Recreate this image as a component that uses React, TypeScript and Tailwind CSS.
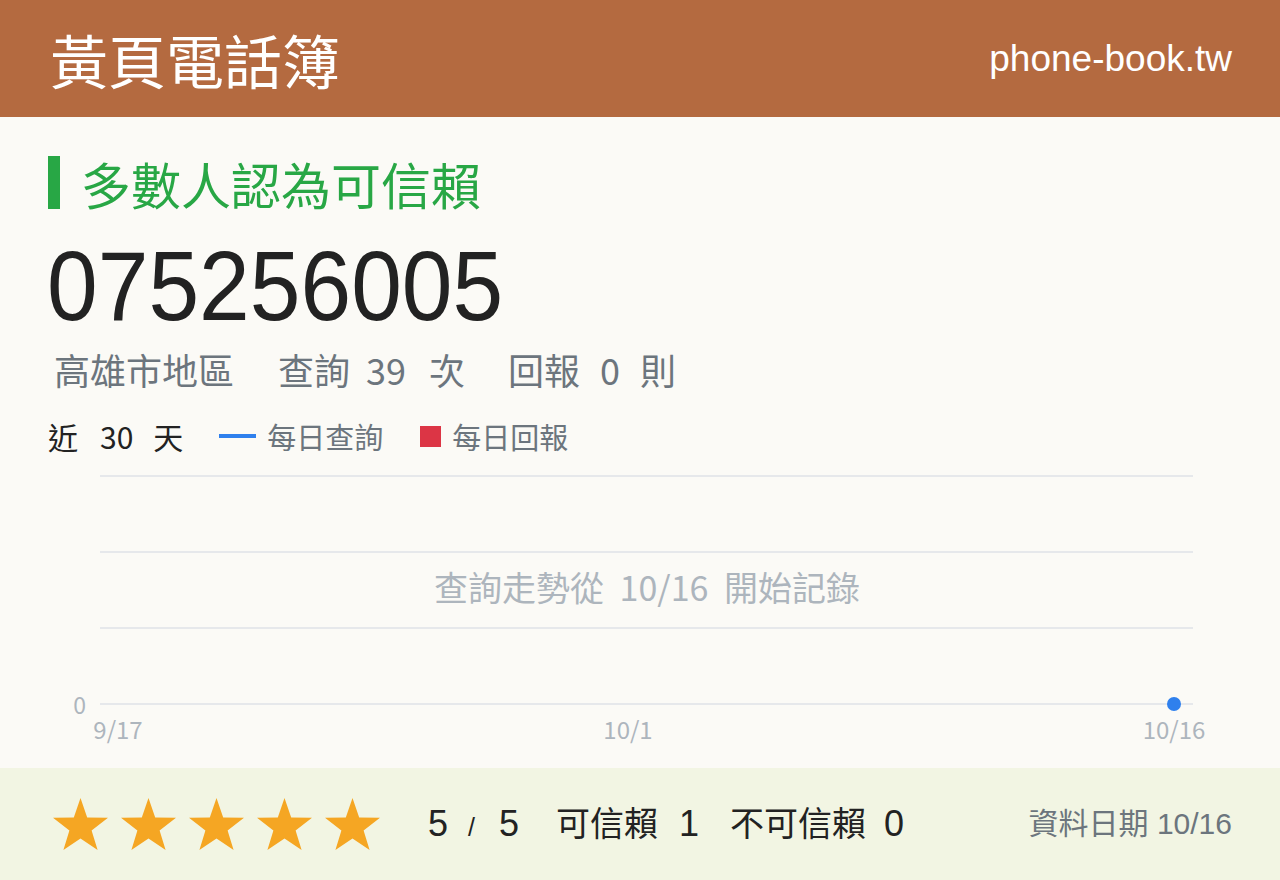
const cjk = { fontFamily: '"Noto Sans CJK TC", sans-serif' };
const latin = { fontFamily: '"Liberation Sans", "Noto Sans CJK TC", sans-serif' };

const Star = () => (
  <svg width="55" height="52" viewBox="0 0 55 52" className="shrink-0">
    <polygon
      points="27.5,0 34.2,19.6 55,19.8 38.6,32.6 44.6,52 27.5,40.6 10.4,52 16.4,32.6 0,19.8 20.8,19.6"
      fill="#f5a623"
    />
  </svg>
);

// 30-day lookup trend; only one data point so far
const TrendChart = () => {
  const grid = [14, 90, 166, 242];
  return (
    <svg width="1280" height="300" viewBox="0 0 1280 300" className="block" style={cjk}>
      {grid.map((y) => (
        <line key={y} x1="100" x2="1193" y1={y} y2={y} stroke="#e6e8eb" strokeWidth="2" />
      ))}
      <text x="86" y="242" textAnchor="end" dominantBaseline="central" fontSize="23" fill="#adb5bd">
        0
      </text>
      <text x="118" y="277" textAnchor="middle" fontSize="24" fill="#adb5bd">9/17</text>
      <text x="628" y="277" textAnchor="middle" fontSize="24" fill="#adb5bd">10/1</text>
      <text x="1174" y="277" textAnchor="middle" fontSize="24" fill="#adb5bd">10/16</text>
      <text
        x="647"
        y="124"
        textAnchor="middle"
        dominantBaseline="central"
        fontSize="34"
        wordSpacing="8"
        fill="#adb5bd"
      >
        查詢走勢從 10/16 開始記錄
      </text>
      <circle cx="1174" cy="242" r="7" fill="#2f80ed" />
    </svg>
  );
};

export default function App() {
  return (
    <div className="w-[1280px] h-[880px] flex flex-col bg-[#fbfaf6] overflow-hidden">
      <header className="h-[117px] shrink-0 bg-[#b46a40] flex items-center justify-between pl-[50px] pr-[48px]">
        <span className="text-[58px] text-white leading-none" style={cjk}>黃頁電話簿</span>
        <span className="text-[37px] text-white leading-none" style={latin}>phone-book.tw</span>
      </header>

      <main className="flex-1 flex flex-col">
        <div className="flex items-center mt-[39px] pl-[48px]">
          <div className="w-[12px] h-[53px] bg-[#28a745]" />
          <span className="ml-[21px] text-[50px] leading-none text-[#28a745]" style={cjk}>
            多數人認為可信賴
          </span>
        </div>

        <div className="pl-[47px] mt-[29px]">
          <div
            className="origin-left scale-x-[0.93] text-[98px] leading-[96px] text-[#222]"
            style={latin}
          >
            075256005
          </div>
        </div>

        <div className="flex items-center pl-[54px] mt-[17px] text-[36px] leading-none text-[#6c757d]" style={cjk}>
          <span>高雄市地區</span>
          <span className="ml-[44px]">查詢</span>
          <span className="ml-[16px]">39</span>
          <span className="ml-[23px]">次</span>
          <span className="ml-[43px]">回報</span>
          <span className="ml-[20px]">0</span>
          <span className="ml-[20px]">則</span>
        </div>

        <div className="flex items-center pl-[48px] mt-[34px]" style={cjk}>
          <span className="text-[30px] leading-none text-[#222]">近</span>
          <span className="ml-[22px] text-[30px] leading-none text-[#222]">30</span>
          <span className="ml-[20px] text-[30px] leading-none text-[#222]">天</span>
          <span className="ml-[36px] w-[37px] h-[4px] bg-[#2f80ed]" />
          <span className="ml-[11px] text-[29px] leading-none text-[#6c757d]">每日查詢</span>
          <span className="ml-[37px] w-[21px] h-[21px] bg-[#dc3545]" />
          <span className="ml-[11px] text-[29px] leading-none text-[#6c757d]">每日回報</span>
        </div>

        <div className="mt-[11px]">
          <TrendChart />
        </div>
      </main>

      <footer className="h-[112px] shrink-0 bg-[#f2f5e3] flex items-center pl-[53px] pr-[48px]" style={latin}>
        <div className="flex items-center gap-[13px]">
          {[0, 1, 2, 3, 4].map((i) => (
            <Star key={i} />
          ))}
        </div>
        <div className="ml-[48px] flex items-baseline text-[36px] leading-none text-[#222]">
          <span>5</span>
          <span className="ml-[20px] text-[25px]">/</span>
          <span className="ml-[24px]">5</span>
          <span className="ml-[37px] text-[34px]">可信賴</span>
          <span className="ml-[21px]">1</span>
          <span className="ml-[31px] text-[34px]">不可信賴</span>
          <span className="ml-[18px]">0</span>
        </div>
        <div className="ml-auto text-[30px] leading-none text-[#6c757d]">資料日期 10/16</div>
      </footer>
    </div>
  );
}
